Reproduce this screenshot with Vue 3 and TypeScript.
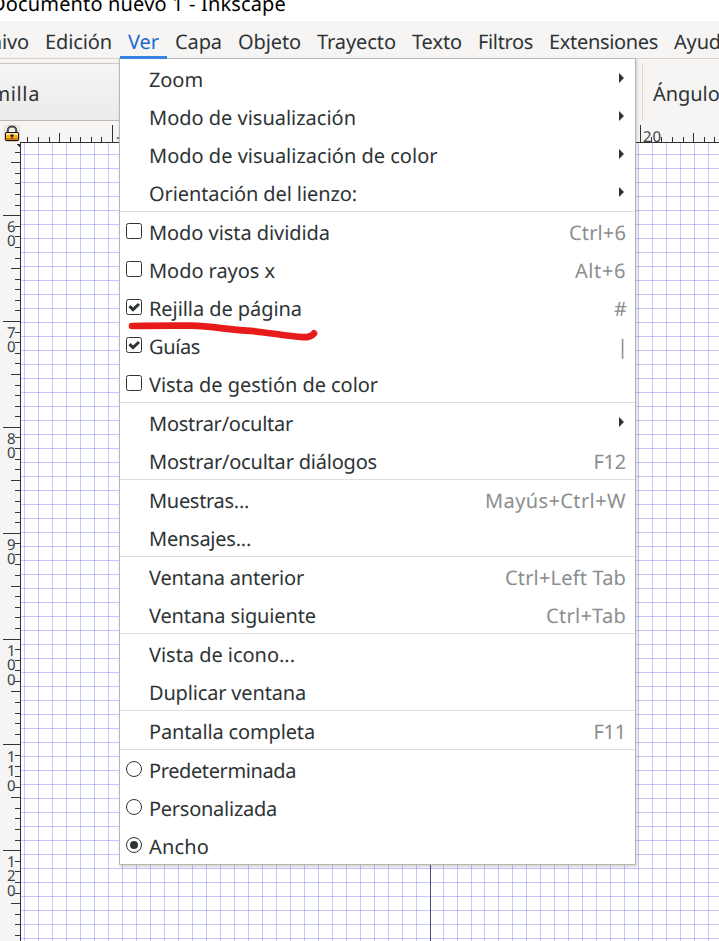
<script setup lang="ts">
import type { Directive } from 'vue'

interface Label { text: string; width: number }
interface MenuItem extends Label {
  kind?: 'check' | 'radio'
  on?: boolean
  submenu?: boolean
  key?: Label
}
interface Tick { pos: number; size: 'minor' | 'mid' | 'major' }

// Spreads the letters of a label so that it takes up the given advance width.
const vFit: Directive<HTMLElement, number> = {
  mounted(el, { value }) {
    const natural = el.getBoundingClientRect().width
    const count = (el.textContent ?? '').length
    el.style.letterSpacing = `${(value - natural) / count}px`
  },
}

const menus: Label[] = [
  { text: 'Archivo', width: 69 },
  { text: 'Edición', width: 67 },
  { text: 'Ver', width: 31 },
  { text: 'Capa', width: 47 },
  { text: 'Objeto', width: 63 },
  { text: 'Trayecto', width: 79 },
  { text: 'Texto', width: 50 },
  { text: 'Filtros', width: 55 },
  { text: 'Extensiones', width: 109 },
  { text: 'Ayuda', width: 58 },
]

const groups: MenuItem[][] = [
  [
    { text: 'Zoom', width: 54, submenu: true },
    { text: 'Modo de visualización', width: 207, submenu: true },
    { text: 'Modo de visualización de color', width: 288.5, submenu: true },
    { text: 'Orientación del lienzo:', width: 208, submenu: true },
  ],
  [
    { text: 'Modo vista dividida', width: 181, kind: 'check', key: { text: 'Ctrl+6', width: 57 } },
    { text: 'Modo rayos x', width: 126, kind: 'check', key: { text: 'Alt+6', width: 51 } },
    { text: 'Rejilla de página', width: 153, kind: 'check', on: true, key: { text: '#', width: 12 } },
    { text: 'Guías', width: 51, kind: 'check', on: true, key: { text: '|', width: 9 } },
    { text: 'Vista de gestión de color', width: 229, kind: 'check' },
  ],
  [
    { text: 'Mostrar/ocultar', width: 144, submenu: true },
    { text: 'Mostrar/ocultar diálogos', width: 228, key: { text: 'F12', width: 32.5 } },
  ],
  [
    { text: 'Muestras...', width: 100, key: { text: 'Mayús+Ctrl+W', width: 141 } },
    { text: 'Mensajes...', width: 102 },
  ],
  [
    { text: 'Ventana anterior', width: 155, key: { text: 'Ctrl+Left Tab', width: 121 } },
    { text: 'Ventana siguiente', width: 167, key: { text: 'Ctrl+Tab', width: 80 } },
  ],
  [
    { text: 'Vista de icono...', width: 146 },
    { text: 'Duplicar ventana', width: 157 },
  ],
  [{ text: 'Pantalla completa', width: 166, key: { text: 'F11', width: 32.5 } }],
  [
    { text: 'Predeterminada', width: 147, kind: 'radio' },
    { text: 'Personalizada', width: 128, kind: 'radio' },
    { text: 'Ancho', width: 60, kind: 'radio', on: true },
  ],
]

function ticks(origin: number, step: number, from: number, to: number): Tick[] {
  const out: Tick[] = []
  for (let k = -60; k < 80; k++) {
    const pos = Math.floor(origin + k * step)
    if (pos < from || pos > to) continue
    out.push({ pos, size: k % 10 === 0 ? 'major' : k % 5 === 0 ? 'mid' : 'minor' })
  }
  return out
}
const length = { minor: 5, mid: 9, major: 17 }
const topTicks = ticks(112.5, 10.565, 23, 719)
const sideTicks = ticks(215.7, 10.583, 150, 941)

const sideNumbers = [
  { text: '60', y: 232 }, { text: '70', y: 338 }, { text: '80', y: 444 }, { text: '90', y: 550 },
  { text: '100', y: 656 }, { text: '110', y: 762 }, { text: '120', y: 867 },
]

const columns: number[] = []
for (let x = 24; x < 430; x += 14) columns.push(x)
columns.push(443, 457, 471)
for (let x = 484; x < 719; x += 14) columns.push(x)
const lines: number[] = []
for (let y = 154; y < 941; y += 14) lines.push(y)
</script>

<template>
  <div class="window">
    <header class="title"><span v-fit="295">Documento nuevo 1 - Inkscape</span></header>
    <nav class="menubar">
      <div v-for="m in menus" :key="m.text" class="menu" :class="{ active: m.text === 'Ver' }">
        <span v-fit="m.width">{{ m.text }}</span>
      </div>
    </nav>
    <div class="toolbar">
      <div class="field"><span v-fit="80">Plumilla</span></div>
      <div class="angle"><span v-fit="72">Ángulo:</span></div>
    </div>
    <main class="canvas">
      <svg width="719" height="820" viewBox="0 121 719 820" shape-rendering="crispEdges">
        <rect x="21" y="143" width="698" height="798" fill="#fff" />
        <g fill="#0000ff" fill-opacity=".22">
          <rect v-for="x in columns" :key="'c' + x" :x="x" y="143" width="1" height="798" />
          <rect v-for="y in lines" :key="'l' + y" x="21" :y="y" width="698" height="1" />
        </g>
        <rect x="430" y="143" width="1" height="798" fill="#4c4c80" />
        <g fill="#2e3436">
          <rect x="20" y="142" width="699" height="1" />
          <rect x="20" y="142" width="1" height="799" />
          <rect v-for="t in topTicks" :key="'t' + t.pos" :x="t.pos" :y="142 - length[t.size]" width="1" :height="length[t.size]" />
          <rect v-for="t in sideTicks" :key="'s' + t.pos" :x="20 - length[t.size]" :y="t.pos" :width="length[t.size]" height="1" />
          <path d="M16 144h4v4z" />
        </g>
        <g class="digits">
          <text x="116" y="142">-10</text>
          <text x="643" y="142" textLength="18">20</text>
          <g v-for="n in sideNumbers" :key="n.text">
            <text v-for="(d, i) in n.text.split('')" :key="i" x="7" :y="n.y + i * 14.4">{{ d }}</text>
          </g>
        </g>
        <g shape-rendering="auto">
          <rect x="4.5" y="125.5" width="15" height="16" rx="3" fill="#f3f1ee" stroke="#d2cec9" />
          <path d="M7.700 133v-2.200a4.300 4.300 0 0 1 8.600 0v2.200" fill="none" stroke="#222" stroke-width="2" />
          <path d="M7.700 132v-1a4.300 4.300 0 0 1 8.600 0v1" fill="none" stroke="#aaa" stroke-width=".5" />
          <rect x="5.5" y="132.5" width="13" height="8" rx=".6" fill="#f6b51e" stroke="#18130a" />
          <path d="M6 133h12v2H6z" fill="#ffe59a" />
          <path d="M6 138h12v2H6z" fill="#d7820f" />
          <path d="M10.500 134.500h3v2h-1v2.500h-1v-2.500h-1z" fill="#111" />
        </g>
      </svg>
    </main>

    <section class="dropdown">
      <div v-for="(g, gi) in groups" :key="gi" class="group">
        <div v-for="item in g" :key="item.text" class="item">
          <svg class="mark" width="16" height="16" viewBox="0 0 16 16">
            <g v-if="item.kind === 'check'">
              <rect x=".5" y=".5" width="15" height="15" rx="2" fill="#fff" stroke="#2e3436" />
              <path v-if="item.on" d="M3.500 7.200 7 10.600 13 5" fill="none" stroke="#2e3436" stroke-width="3" />
            </g>
            <g v-else-if="item.kind === 'radio'">
              <circle cx="8" cy="8" r="7.5" fill="#fff" stroke="#2e3436" />
              <circle v-if="item.on" cx="8" cy="8" r="4" fill="#2e3436" />
            </g>
          </svg>
          <span v-fit="item.width" class="label">{{ item.text }}</span>
          <span v-if="item.key" v-fit="item.key.width" class="key">{{ item.key.text }}</span>
          <svg v-if="item.submenu" class="arrow" width="5" height="10" viewBox="0 0 5 10">
            <path d="M0 0 5 5 0 10z" fill="#2e3436" />
          </svg>
        </div>
      </div>
    </section>

    <svg class="stroke" width="196" height="24" viewBox="124 318 196 24">
      <path d="M132 326C152 325.600 172 325.400 191 325.700C211 326.200 228 329.600 247 330.700C266 331.900 284 335.800 303 337.200C309 337.400 311.500 336.200 314 333.400" fill="none" stroke="#e81b1b" stroke-width="6.7" stroke-linecap="round" stroke-linejoin="round" />
    </svg>
  </div>
</template>

<style>
body { overflow: hidden; }
</style>

<style scoped>
.window {
  position: relative;
  display: flex;
  flex-direction: column;
  width: 719px;
  height: 941px;
  overflow: hidden;
  background: #f6f5f4;
  color: #2e3436;
  font: 20px/28px "Noto Sans", "Open Sans", sans-serif;
  white-space: nowrap;
  text-rendering: geometricPrecision;
}
.title {
  box-sizing: border-box;
  flex: 0 0 21px;
  display: flex;
  align-items: flex-end;
  height: 21px;
  padding: 0 0 3px;
  margin-left: -9px;
  background: #fff;
  color: #000;
}
.menubar {
  box-sizing: border-box;
  flex: 0 0 38px;
  display: flex;
  height: 38px;
  min-height: 0;
  margin-left: -48px;
  border-bottom: 1px solid #d5d0cc;
}
.menu {
  box-sizing: border-box;
  flex: none;
  height: 38px;
  padding: 7px 8px 0;
}
.menu.active {
  position: relative;
  z-index: 1;
  color: #1b6acb;
  border-bottom: 3px solid #3584e4;
}
.toolbar {
  box-sizing: border-box;
  flex: 0 0 62px;
  display: flex;
  justify-content: space-between;
  padding-top: 4px;
}
.field {
  box-sizing: border-box;
  width: 200px;
  height: 58px;
  padding-top: 16px;
  margin-left: -41px;
  border: 1px solid #cdc7c2;
  border-bottom-color: #bfb8b1;
  background: linear-gradient(#f6f5f4, #edebe9);
}
.angle {
  box-sizing: border-box;
  width: 77px;
  height: 58px;
  padding: 17px 0 0 10px;
  border-left: 1px solid #dad6d2;
}
.canvas {
  flex: 1;
}
.canvas svg {
  display: block;
}
.digits {
  font-size: 15px;
  fill: #3b4143;
}
.dropdown {
  position: absolute;
  left: 119px;
  top: 58px;
  width: 515px;
  border: 1px solid #b9b7b5;
  background: #fff;
  box-shadow: 1px 2px 3px rgba(0, 0, 0, 0.18);
  clip-path: inset(0 -6px -6px -2px);
}
.group + .group {
  border-top: 1px solid #e1dfdd;
}
.item {
  display: flex;
  align-items: center;
  height: 38px;
  padding: 0 9px 0 6px;
}
.mark {
  flex: none;
  margin: 0 7px 1px 0;
}
.label {
  padding-top: 3px;
}
.key {
  margin-left: auto;
  padding-top: 3px;
  color: #8b8e8f;
}
.arrow {
  margin: 0 2px 1px auto;
}
.stroke {
  position: absolute;
  left: 124px;
  top: 318px;
}
</style>
